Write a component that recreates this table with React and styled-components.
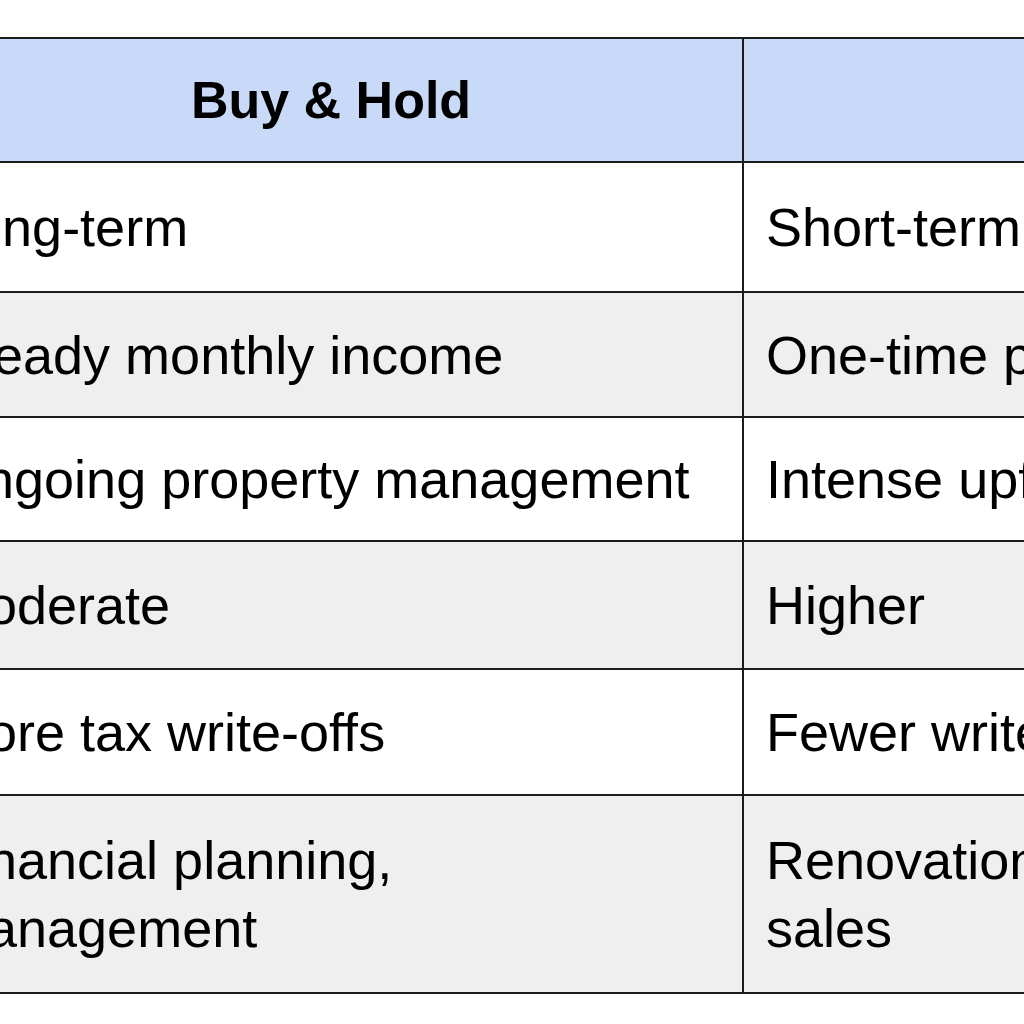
import React from "react";
import styled, { createGlobalStyle } from "styled-components";

const Global = createGlobalStyle`
  html, body { margin: 0; padding: 0; background: #ffffff; }
  * { box-sizing: border-box; }
`;

const Page = styled.div`
  width: 1024px;
  height: 1024px;
  overflow: hidden;
  background: #ffffff;
  padding-top: 37px;
  font-family: "Liberation Sans", Arial, sans-serif;
  color: #000000;
`;

const Table = styled.div`
  margin-left: -80px;
  width: 1648px;
  border-top: 2px solid #1c1c1c;
`;

const Row = styled.div`
  display: grid;
  grid-template-columns: 824px 824px;
  height: ${(p) => p.$h}px;
  border-bottom: 2px solid #1c1c1c;
  background: ${(p) => p.$bg};
`;

const Cell = styled.div`
  display: flex;
  align-items: center;
  padding: 0 22px;
  border-right: 2px solid #1c1c1c;
  font-size: 54px;
  line-height: 68px;
  white-space: nowrap;
  overflow: hidden;
`;

const HeadCell = styled(Cell)`
  justify-content: center;
  font-weight: 700;
  font-size: 52px;
`;

const rows = [
  { h: 130, bg: "#ffffff", a: "Long-term", b: "Short-term" },
  { h: 125, bg: "#efefef", a: "Steady monthly income", b: "One-time profit" },
  { h: 124, bg: "#ffffff", a: "Ongoing property management", b: "Intense upfront work" },
  { h: 128, bg: "#efefef", a: "Moderate", b: "Higher" },
  { h: 126, bg: "#ffffff", a: "More tax write-offs", b: "Fewer write-offs" },
  {
    h: 198,
    bg: "#efefef",
    a: (
      <span>
        Financial planning,
        <br />
        management
      </span>
    ),
    b: (
      <span>
        Renovation, marketing,
        <br />
        sales
      </span>
    ),
  },
];

export default function App() {
  return (
    <>
      <Global />
      <Page>
        <Table>
          <Row $h={124} $bg="#c9daf8">
            <HeadCell>Buy &amp; Hold</HeadCell>
            <HeadCell>Fix &amp; Flip</HeadCell>
          </Row>
          {rows.map((r, i) => (
            <Row key={i} $h={r.h} $bg={r.bg}>
              <Cell>{r.a}</Cell>
              <Cell>{r.b}</Cell>
            </Row>
          ))}
        </Table>
      </Page>
    </>
  );
}
